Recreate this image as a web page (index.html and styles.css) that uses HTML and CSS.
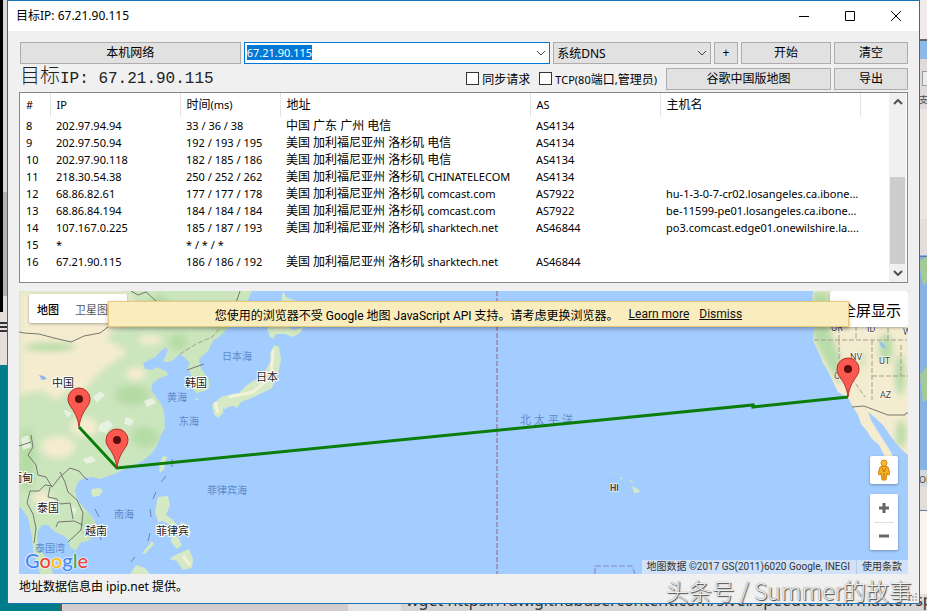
FILE: index.html
```
<!DOCTYPE html>
<html lang="zh-CN">
<head>
    <meta charset="UTF-8">
    <meta name="viewport" content="width=device-width, initial-scale=1.0">
    <title>目标IP: 67.21.90.115</title>
    <link rel="stylesheet" href="styles.css">
</head>
<body>
    <svg class="desktop" viewBox="0 0 927 611" preserveAspectRatio="none" aria-hidden="true">
        <rect width="927" height="611" fill="#e3dedc"/>
        <rect width="3" height="312" fill="#000"/>
        <rect x="3" width="5" height="192" fill="#dcd8d7"/>
        <rect x="3" y="192" width="5" height="104" fill="#b5b3b3"/>
        <path d="M0 323h8M0 327h8M0 331h8" stroke="#333" stroke-width="2"/>
        <rect y="365" width="61" height="246" fill="#007b8a"/>
        <rect x="61" y="600" width="287" height="11" fill="#d2cdcc"/>
        <rect x="60" y="600" width="2" height="11" fill="#5e5e5e"/>
        <rect x="348" y="600" width="53" height="11" fill="#e4e4e4"/>
        <rect x="401" y="600" width="526" height="11" fill="#d6d6d6"/>
        <rect x="919" width="8" height="40" fill="#f1eceb"/>
        <rect x="919" y="39" width="8" height="2" fill="#666"/>
        <rect x="919" y="41" width="8" height="18" fill="#8cb8ea"/>
        <rect x="919" y="59" width="8" height="50" fill="#dedad9"/>
        <rect x="922.500" y="71.500" width="8" height="14" fill="#ececec" stroke="#999"/>
        <rect x="919" y="109" width="8" height="110" fill="#eae6e4"/>
        <rect x="919" y="255" width="8" height="215" fill="#88b2e4"/>
        <path d="M919 261l8-4v25l-4 4zM920 375l7-9v34l-4 2z" fill="#a6c998"/>
        <rect x="919" y="470" width="8" height="17" fill="#d3d8df"/>
        <rect x="919" y="510" width="8" height="84" fill="#f7f4f2"/>
        <path d="M919 256.500h8M919 510.500h8" stroke="#6b7a90"/>
        <text class="desktop-mini" x="919" y="103">支持</text>
        <text class="desktop-mini" x="919" y="483">OR</text>
        <text class="desktop-text" x="406" y="606">wget https://raw.githubusercontent.com/sivel/speedtest-cli/master/speedtest.py</text>
    </svg>

    <main class="window">
        <header class="title-bar">
            <h1 class="title">目标IP: 67.21.90.115</h1>
            <div class="caption">
                <button class="caption-button" aria-label="最小化"><svg width="12" height="12"><path d="M1 6.500h10"/></svg></button>
                <button class="caption-button" aria-label="最大化"><svg width="12" height="12"><path d="M1.500 1.500h9v9h-9z"/></svg></button>
                <button class="caption-button" aria-label="关闭"><svg width="12" height="12"><path d="M1 1l10 10M11 1L1 11"/></svg></button>
            </div>
        </header>

        <section class="content">
            <div class="toolbar">
                <button class="button button-local">本机网络</button>
                <div class="combo combo-ip">
                    <input class="ip-input" id="ip" type="text" value="67.21.90.115" aria-label="目标IP">
                    <svg class="chevron" width="10" height="6"><path d="M1 1l4 4 4-4"/></svg>
                </div>
                <div class="combo combo-dns">
                    <select class="dns-select" aria-label="DNS">
                        <option>系统DNS</option>
                    </select>
                    <svg class="chevron" width="10" height="6"><path d="M1 1l4 4 4-4"/></svg>
                </div>
                <button class="button button-add">+</button>
                <button class="button button-start">开始</button>
                <button class="button button-side">清空</button>
            </div>

            <div class="toolbar toolbar-second">
                <h2 class="target"><span class="target-cjk">目标</span>IP: 67.21.90.115</h2>
                <div class="checks">
                    <label class="check"><input type="checkbox">同步请求</label>
                    <label class="check"><input type="checkbox"><span><span class="en">TCP(80</span>端口<span class="en">,</span>管理员<span class="en">)</span></span></label>
                </div>
                <button class="button button-map">谷歌中国版地图</button>
                <button class="button button-side">导出</button>
            </div>

            <div class="list">
                <table class="hops">
                    <colgroup>
                        <col class="col-no"><col class="col-ip"><col class="col-time"><col class="col-place"><col class="col-as"><col class="col-host"><col>
                    </colgroup>
                    <thead>
                        <tr><th>#</th><th>IP</th><th><span class="cjk">时间</span>(ms)</th><th><span class="cjk">地址</span></th><th>AS</th><th><span class="cjk">主机名</span></th><th></th></tr>
                    </thead>
                    <tbody>
                        <tr><td>8</td><td>202.97.94.94</td><td>33 / 36 / 38</td><td class="place">中国 广东 广州 电信</td><td>AS4134</td><td></td><td></td></tr>
                        <tr><td>9</td><td>202.97.50.94</td><td>192 / 193 / 195</td><td class="place">美国 加利福尼亚州 洛杉矶 电信</td><td>AS4134</td><td></td><td></td></tr>
                        <tr><td>10</td><td>202.97.90.118</td><td>182 / 185 / 186</td><td class="place">美国 加利福尼亚州 洛杉矶 电信</td><td>AS4134</td><td></td><td></td></tr>
                        <tr><td>11</td><td>218.30.54.38</td><td>250 / 252 / 262</td><td class="place">美国 加利福尼亚州 洛杉矶 <span class="en">CHINATELECOM</span></td><td>AS4134</td><td></td><td></td></tr>
                        <tr><td>12</td><td>68.86.82.61</td><td>177 / 177 / 178</td><td class="place">美国 加利福尼亚州 洛杉矶 <span class="en">comcast.com</span></td><td>AS7922</td><td>hu-1-3-0-7-cr02.losangeles.ca.ibone...</td><td></td></tr>
                        <tr><td>13</td><td>68.86.84.194</td><td>184 / 184 / 184</td><td class="place">美国 加利福尼亚州 洛杉矶 <span class="en">comcast.com</span></td><td>AS7922</td><td>be-11599-pe01.losangeles.ca.ibone...</td><td></td></tr>
                        <tr><td>14</td><td>107.167.0.225</td><td>185 / 187 / 193</td><td class="place">美国 加利福尼亚州 洛杉矶 <span class="en">sharktech.net</span></td><td>AS46844</td><td>po3.comcast.edge01.onewilshire.la....</td><td></td></tr>
                        <tr><td>15</td><td>*</td><td>* / * / *</td><td></td><td></td><td></td><td></td></tr>
                        <tr><td>16</td><td>67.21.90.115</td><td>186 / 186 / 192</td><td class="place">美国 加利福尼亚州 洛杉矶 <span class="en">sharktech.net</span></td><td>AS46844</td><td></td><td></td></tr>
                    </tbody>
                </table>
                <div class="scrollbar">
                    <svg width="10" height="6"><path d="M1 5l4-4 4 4"/></svg>
                    <div class="scroll-track"><div class="scroll-thumb"></div></div>
                    <svg width="10" height="6"><path d="M1 1l4 4 4-4"/></svg>
                </div>
            </div>

            <div class="map">
                <svg class="map-canvas" viewBox="19 291 889 283" preserveAspectRatio="xMidYMid slice">
                    <defs>
                        <filter id="soft" x="-20%" y="-20%" width="140%" height="140%"><feGaussianBlur stdDeviation="3"/></filter>
                        <path id="asia" d="M19 291H252L246 304 236 318 227 329 220 336 213 341 208 351 199 359 200 366 204 373 209 379 210 387 205 391 197 393 192 388 193 380 190 372 187 369 190 363 185 358 180 354 173 360 168 362 163 362 168 350 165 347 160 352 155 357 149 360 143 363 145 369 151 370 157 367 167 372 168 375 160 378 153 383 151 390 156 397 161 404 164 411 165 428 160 437 157 446 152 453 144 460 133 466 124 469 117 473 106 477 100 479 92 477 84 478 78 482 75 491 78 501 86 510 93 518 97 526 95 535 88 541 80 543 76 551 70 547 68 539 62 535 55 532 48 525 42 525 38 531 37 540 40 549 46 558 51 567 53 574H40L36 560 33 550 32 537 28 518 22 509 19 507z"/>
                        <path id="america" d="M813 291H908V455L900 448 892 438 883 425 872 415 868 412 871 420 877 430 884 441 891 452 893 457H885L879 445 871 438 867 431 861 424 858 415 853 407 848 398 838 392 833 382 828 371 823 363 819 353 813 340 815 325 812 310z"/>
                        <clipPath id="asia-clip"><use href="#asia"/></clipPath>
                        <clipPath id="america-clip"><use href="#america"/></clipPath>
                        <g id="pin">
                            <path d="M0 0C-1-9-4-14-8-20-10-23-11-25-11-28A11 11 0 0 1 11-28C11-25 10-23 8-20 4-14 1-9 0 0z" fill="#fb5a50" stroke="#b3302a"/>
                            <circle cy="-28" r="4" fill="#5c0d0d"/>
                        </g>
                    </defs>
                    <rect x="19" y="291" width="889" height="283" fill="#a3ccff"/>

                    <use href="#asia" fill="#cbe5bd"/>
                    <g clip-path="url(#asia-clip)">
                        <g filter="url(#soft)" fill="#f5ecd0">
                            <path d="M19 291H125L140 310 105 338 128 352 100 372 82 392 70 388 58 400 40 390 19 395z"/>
                            <ellipse cx="58" cy="447" rx="17" ry="11"/>
                            <ellipse cx="84" cy="427" rx="14" ry="10"/>
                            <ellipse cx="136" cy="374" rx="10" ry="7"/>
                            <ellipse cx="150" cy="340" rx="12" ry="5"/>
                            <ellipse cx="185" cy="312" rx="14" ry="6"/>
                            <ellipse cx="42" cy="498" rx="10" ry="7"/>
                        </g>
                        <g filter="url(#soft)" fill="#b5dba5">
                            <ellipse cx="222" cy="318" rx="13" ry="12"/>
                            <ellipse cx="178" cy="342" rx="9" ry="8"/>
                            <ellipse cx="160" cy="308" rx="9" ry="13"/>
                            <ellipse cx="132" cy="395" rx="17" ry="10"/>
                            <ellipse cx="27" cy="460" rx="8" ry="32"/>
                            <ellipse cx="145" cy="437" rx="13" ry="10"/>
                            <ellipse cx="50" cy="347" rx="26" ry="4"/>
                            <ellipse cx="88" cy="525" rx="5" ry="13"/>
                        </g>
                        <g fill="#eef5e9" opacity="0.800">
                            <path d="M100 424l8-4 5 5-7 8-8-2zM126 417l8 3-3 6-7-2zM93 397l7-6 5 4-8 8zM21 438l7-3 3 12-8 3zM46 502l8-4 2 7-7 5zM83 459l9-3 4 5-10 3zM144 401l8-3 4 5-9 4zM63 409l9 4-5 5zM151 359l8-4-2 5zM70 505l7 4-3 6zM118 440l8-2 4 4-9 4z"/>
                        </g>
                        <path d="M39 375l5 1 3 3-5 1z" fill="#8fb7ea"/>
                    </g>

                    <use href="#america" fill="#f4ecd0"/>
                    <g clip-path="url(#america-clip)">
                        <g filter="url(#soft)" fill="#b7dba8">
                            <path d="M812 291H829L830 330 838 352 846 375 838 384 822 356 810 330z"/>
                            <ellipse cx="886" cy="348" rx="7" ry="15"/>
                            <ellipse cx="900" cy="375" rx="5" ry="20"/>
                            <ellipse cx="901" cy="434" rx="5" ry="14"/>
                            <ellipse cx="862" cy="360" rx="4" ry="10" opacity="0.500"/>
                        </g>
                        <path d="M879 341l5 3 2 5-5-2z" fill="#94bfee"/>
                    </g>

                    <g fill="#d6e9c5">
                        <path d="M274 345l5 2 2 13-3 14-4 9-2 5-8 4-8 4-7 3-8 3-4 6-6-3-6 4-9-1-4-3 9-8 11-3 7-1 8-8 6-4 7-4 5-6 6-10-1-7z"/>
                        <path d="M212 405l7-5 4 5 0 8-5 5-4-4zM227 401l8-3 2 5-7 4zM283 291l3 6 13 5-2 5 6 7-11 3-8 8-5 5-7-2-2 6-3-4 4-8 8-9zM270 331l6-6 10 1 8 4 9-3-2 5-8 5-8-3-9 0-3 5-4-3z"/>
                        <path d="M92 489l8-1 3 3-4 5-6 1-2-4zM163 456l4 1-3 12-4 4-1-8zM158 497l10-1 2 9-4 10 6 4 5 6-4 1-11-5-4 1-3-11zM180 522l8 3 3 8-5 1-5-6zM171 534l7 3 4 8-5 4-6-7zM177 554l12-5 4 10-1 9-9 2-6-9-8-2zM152 541l-10 12 3 1 9-10zM136 565l9 3 5 6H130z"/>
                        <path d="M195 398l4 1-3 2zM632 486l6 3 2 3-6 1zM630 480l4 2h-4zM621 477l2 2h-3zM613 473l2 1h-3z"/>
                    </g>
                    <path d="M273 350l-2 27-18 15-24 5M215 402l3 11M183 556l7 9" fill="none" stroke="#f3f1d9" stroke-width="3"/>

                    <g class="border">
                        <path d="M19 332l5 1 15 1 15 4 17 4 13-6 16-3 8-6 20-8 3-4M131 291l7 4 8-3 10 9M240 291l-4 12-3 8M187 370l17-6"/>
                        <path d="M31 435l2 12-5 8 8 10 2 10 8 2 6 10 8-10 10-9 9 3 5 6 4 3M52 486l-7-1-6 6-9 0-3 12 6 11 3 14-2 15M50 487l-2 10 9 2 3 5 10-1 2 10 1 6M60 472l5 10 3 10 9 8 6 13-2 17-13 12M56 527l2-5 16-1 9 4M19 446l12-4M852 407l12-1 24 9 17 0 1-2h2"/>
                    </g>
                    <g class="border-dashed">
                        <path d="M180 354l16-10 16-7 7-8M839 328v12M856 291v49M814 340h93M839 340v20l26 37M872 340v60M872 376h36M901 345v31M888 328v12"/>
                    </g>
                    <g class="sea-line">
                        <path d="M172 459v8M161 482l5-6M153 499l3-7M151 517l-1-8M148 541l2-8M131 562l4-5M95 509l4 8M100 536l1 4"/>
                    </g>
                    <path class="date-line" d="M497 291V574"/>
                    <path class="zone-line" d="M595 574v-8h37l3 8"/>

                    <g class="country">
                        <text x="52" y="387">中国</text>
                        <text x="185" y="387">韩国</text>
                        <text x="256" y="381">日本</text>
                        <text x="11" y="482">缅甸</text>
                        <text x="37" y="512">泰国</text>
                        <text x="85" y="535">越南</text>
                        <text x="156" y="535">菲律宾</text>
                    </g>
                    <g class="sea">
                        <text x="222" y="360">日本海</text>
                        <text x="167" y="401">黄海</text>
                        <text x="179" y="425">东海</text>
                        <text x="207" y="494">菲律宾海</text>
                        <text x="114" y="518">南海</text>
                        <text x="35" y="552">泰国湾</text>
                        <text class="ocean" x="520" y="424">北太平洋</text>
                    </g>
                    <g class="state">
                        <text x="831" y="331">OR</text>
                        <text x="867" y="332">ID</text>
                        <text x="903" y="335">WY</text>
                        <text x="850" y="360">NV</text>
                        <text x="879" y="364">UT</text>
                        <text x="834" y="379">CA</text>
                        <text x="880" y="398">AZ</text>
                        <text class="hawaii" x="610" y="491">HI</text>
                    </g>

                    <path class="route" d="M79 427L117 468 753 405 753 407 848 397"/>
                    <use href="#pin" x="79" y="427"/>
                    <use href="#pin" x="117" y="468"/>
                    <use href="#pin" x="848" y="397"/>
                </svg>

                <div class="map-types">
                    <button class="map-type map-type-active">地图</button>
                    <button class="map-type">卫星图像</button>
                </div>
                <button class="fullscreen">全屏显示</button>
                <div class="banner">
                    <span>您使用的浏览器不受 Google 地图 JavaScript API 支持。请考虑更换浏览器。</span>
                    <a href="#learn">Learn more</a>
                    <a href="#dismiss">Dismiss</a>
                </div>
                <div class="map-controls">
                    <button class="pegman" aria-label="街景小人">
                        <svg width="12" height="22" viewBox="0 0 12 22">
                            <path d="M2 8Q6 6 10 8L12 15 10 16 9 14 8 21H4L3 14 2 16 0 15z" fill="#f5b01d" stroke="#cf8411"/>
                            <path d="M4 9l2 4 2-4M6 14v6" fill="none" stroke="#c56f10"/>
                            <circle cx="6" cy="4" r="3" fill="#f8bd31" stroke="#cf8411"/>
                        </svg>
                    </button>
                    <div class="zoom">
                        <button aria-label="放大"><svg width="12" height="12"><path d="M6 1v10M1 6h10"/></svg></button>
                        <button aria-label="缩小"><svg width="12" height="12"><path d="M1 6h10"/></svg></button>
                    </div>
                </div>
                <div class="google-logo"><span class="blue">G</span><span class="red">o</span><span class="yellow">o</span><span class="blue">g</span><span class="green">l</span><span class="red">e</span></div>
                <div class="copyright"><span>地图数据 ©2017 GS(2011)6020 Google, INEGI</span><a href="#terms">使用条款</a></div>
            </div>
        </section>

        <footer class="status">地址数据信息由 ipip.net 提供。</footer>
        <svg class="grip" width="8" height="8"><path d="M6 0h2v2h-2zM3 3h2v2h-2zM6 3h2v2h-2zM0 6h2v2h-2zM3 6h2v2h-2zM6 6h2v2h-2z"/></svg>
    </main>
    <div class="watermark">头条号 / Summer的故事</div>

    <script>
        const ipInput = document.getElementById('ip');
        ipInput.focus();
        ipInput.select();
    </script>
</body>
</html>
```
FILE: styles.css
```
* {
    box-sizing: border-box;
}

body {
    margin: 0;
    height: 100vh;
    padding: 0 7px 7px;
    position: relative;
    overflow: hidden;
    display: flex;
    font-family: "Noto Sans", "Noto Sans CJK SC", sans-serif;
    font-size: 12px;
    color: #000;
}

button,
input,
select {
    font: inherit;
    color: inherit;
}

.desktop {
    position: absolute;
    top: 0;
    left: 0;
    width: 100%;
    height: 100%;
}

.desktop-text {
    font-size: 16px;
    fill: #333;
}

.desktop-mini {
    font-size: 9px;
    fill: #444;
}

/* Window */
.window {
    position: relative;
    flex: 1;
    min-width: 0;
    display: flex;
    flex-direction: column;
    background: #f0f0f0;
    border: 1px solid #1c74b8;
}

.title-bar {
    display: flex;
    justify-content: space-between;
    height: 30px;
    background: #fff;
}

.title {
    margin: 0;
    padding-left: 8px;
    font-size: 12px;
    font-weight: normal;
    line-height: 29px;
}

.caption {
    display: flex;
}

.caption-button {
    width: 46px;
    padding: 0;
    border: none;
    background: none;
    display: flex;
    align-items: center;
    justify-content: center;
}

.caption-button svg {
    fill: none;
    stroke: #000;
}

.content {
    flex: 1;
    min-height: 0;
    display: flex;
    flex-direction: column;
    padding: 11px 11px 0 11px;
}

/* Toolbar */
.toolbar {
    display: flex;
    align-items: center;
    gap: 3px;
    padding-left: 1px;
}

.toolbar-second {
    margin: 3px 0 2px;
}

.button {
    height: 22px;
    padding: 0;
    border: 1px solid #adadad;
    background: #e1e1e1;
    line-height: 18px;
}

.button-local {
    flex: 219;
}

.button-add {
    width: 24px;
}

.button-start {
    width: 90px;
}

.button-side {
    width: 74px;
}

.button-map {
    width: 165px;
}

.combo {
    position: relative;
    height: 22px;
}

.combo-ip {
    flex: 307;
}

.combo-dns {
    flex: 158;
}

.ip-input {
    width: 100%;
    height: 22px;
    padding: 0 20px 2px 2px;
    border: 1px solid #0078d7;
    outline: none;
    background: #fff;
    font-size: 11px;
}

.ip-input::selection {
    background: #0078d7;
    color: #fff;
}

.dns-select {
    width: 100%;
    height: 22px;
    padding: 0 3px;
    border: 1px solid #adadad;
    border-radius: 0;
    background: #e1e1e1;
    appearance: none;
    font-size: 12px;
}

.chevron {
    position: absolute;
    top: 8px;
    right: 4px;
    fill: none;
    stroke: #444;
    pointer-events: none;
}

.target {
    flex: 1;
    margin: 0;
    font: 16px/22px "Liberation Mono", "Noto Sans CJK SC", monospace;
    color: #222;
}

.target-cjk {
    font-size: 20px;
    font-weight: 300;
}

.checks {
    display: flex;
    gap: 9px;
    padding-right: 6px;
}

.check {
    display: flex;
    align-items: center;
    gap: 3px;
}

.check input {
    appearance: none;
    width: 13px;
    height: 13px;
    margin: 0;
    border: 1px solid #333;
    background: #fff;
}

.en {
    font-size: 11px;
}

/* Hop list */
.list {
    display: flex;
    min-height: 191px;
    padding-right: 1px;
    border: 1px solid #828790;
    background: #fff;
}

.hops {
    flex: 1;
    min-width: 0;
    align-self: flex-start;
    table-layout: fixed;
    border-collapse: collapse;
    font-size: 11px;
}

.col-no {
    width: 30px;
}

.col-ip,
.col-as {
    width: 130px;
}

.col-time {
    width: 100px;
}

.col-place {
    width: 250px;
}

.col-host {
    width: 200px;
}

.hops th,
.hops td {
    padding: 0 0 0 6px;
    text-align: left;
    font-weight: normal;
    white-space: nowrap;
    overflow: hidden;
}

.hops th {
    height: 24px;
    border-right: 1px solid #e5e5e5;
    line-height: 24px;
}

.hops th:last-child {
    border-right: none;
}

.hops td {
    height: 17px;
    line-height: 17px;
}

.cjk,
.hops .place {
    font-size: 12px;
}

.scrollbar {
    width: 17px;
    display: flex;
    flex-direction: column;
    align-items: center;
    gap: 6px;
    padding: 6px 0;
    background: #f0f0f0;
}

.scrollbar svg {
    fill: none;
    stroke: #505050;
    stroke-width: 2;
}

.scroll-track {
    flex: 1;
    width: 100%;
    display: flex;
    flex-direction: column;
    justify-content: flex-end;
}

.scroll-thumb {
    height: 57%;
    margin: 0 1px;
    background: #cdcdcd;
}

/* Map */
.map {
    position: relative;
    flex: 1;
    min-height: 0;
    margin-top: 8px;
    overflow: hidden;
    background: #a3ccff;
    font-family: Roboto, "Noto Sans CJK SC", sans-serif;
}

.map-canvas {
    position: absolute;
    width: 100%;
    height: 100%;
}

.border {
    fill: none;
    stroke: #75776f;
}

.border-dashed {
    fill: none;
    stroke: #a3a08e;
    stroke-dasharray: 5 2;
}

.sea-line {
    fill: none;
    stroke: #6c83a8;
}

.date-line {
    fill: none;
    stroke: #9a96bf;
    stroke-width: 2;
    stroke-dasharray: 5 2;
}

.zone-line {
    fill: none;
    stroke: #8587b2;
    stroke-dasharray: 6 2;
}

.country,
.state {
    fill: #222;
    stroke: #fff;
    stroke-width: 2;
    paint-order: stroke;
    font-size: 11px;
}

.state {
    fill: #444;
    stroke-width: 1;
    font-size: 9px;
}

.hawaii {
    font-weight: bold;
}

.sea {
    fill: #5f8bc9;
    font-size: 10px;
}

.ocean {
    font-size: 11px;
    letter-spacing: 3px;
}

.route {
    fill: none;
    stroke: #0a7d0a;
    stroke-width: 3;
}

.map-types {
    position: absolute;
    top: 3px;
    left: 10px;
    display: flex;
    height: 29px;
    background: #fff;
    border-radius: 2px;
    box-shadow: 0 1px 3px rgba(0,0,0,0.3);
}

.map-type {
    padding: 0 8px;
    border: none;
    background: none;
    font-size: 11px;
    color: #565656;
}

.map-type + .map-type {
    width: 60px;
    text-align: left;
    white-space: nowrap;
    overflow: hidden;
}

.map-type-active {
    color: #000;
    font-weight: 500;
}

.fullscreen {
    position: absolute;
    top: 0;
    right: 0;
    width: 78px;
    height: 36px;
    padding: 0 7px 0 0;
    border: none;
    border-radius: 2px;
    background: #fff;
    text-align: right;
    font-size: 15px;
    box-shadow: 0 1px 3px rgba(0,0,0,0.3);
}

.banner {
    position: absolute;
    top: 10px;
    left: 10%;
    right: 59px;
    height: 26px;
    display: flex;
    align-items: center;
    justify-content: center;
    gap: 10px;
    background: #f9edbe;
    border: 1px solid #e8c87c;
    box-shadow: 0 2px 4px rgba(0,0,0,0.3);
    font-size: 12px;
    white-space: nowrap;
}

.banner a {
    color: #111;
}

.map-controls {
    position: absolute;
    right: 10px;
    bottom: 24px;
    display: flex;
    flex-direction: column;
    gap: 10px;
}

.map-controls button {
    width: 28px;
    height: 28px;
    padding: 0;
    border: none;
    border-radius: 2px;
    background: #fff;
    display: flex;
    align-items: center;
    justify-content: center;
}

.pegman,
.zoom {
    border-radius: 2px;
    box-shadow: 0 1px 3px rgba(0,0,0,0.3);
}

.zoom {
    background: #fff;
}

.zoom svg {
    stroke: #666;
    stroke-width: 3;
}

.zoom button + button {
    position: relative;
}

.zoom button + button::before {
    content: "";
    position: absolute;
    top: 0;
    left: 4px;
    right: 4px;
    border-top: 1px solid #e0e0e0;
}

.google-logo {
    position: absolute;
    left: 6px;
    bottom: 2px;
    font: 500 20px/24px Lato, sans-serif;
    text-shadow: 0 0 2px #fff, 0 0 2px #fff, 0 0 1px #fff;
}

.blue { color: #4285f4; }
.red { color: #ea4335; }
.yellow { color: #fbbc05; }
.green { color: #34a853; }

.copyright {
    position: absolute;
    right: 0;
    bottom: 0;
    display: flex;
    background: rgba(225,235,246,0.7);
    font-size: 10px;
    line-height: 14px;
    color: #333;
}

.copyright span,
.copyright a {
    padding: 0 6px 0 5px;
}

.copyright a {
    border-left: 1px solid #bccbdd;
    color: #333;
    text-decoration: none;
}

.status {
    height: 29px;
    padding-left: 11px;
    line-height: 26px;
}

.grip {
    position: absolute;
    right: 2px;
    bottom: 2px;
    fill: #b8b8b8;
}

.watermark {
    position: absolute;
    right: 15px;
    bottom: 5px;
    font: 300 23px/32px "Noto Sans CJK SC", sans-serif;
    color: #eee;
    text-shadow: 1px 1px 1px #444, 0 0 1px #666;
    white-space: nowrap;
}
```
